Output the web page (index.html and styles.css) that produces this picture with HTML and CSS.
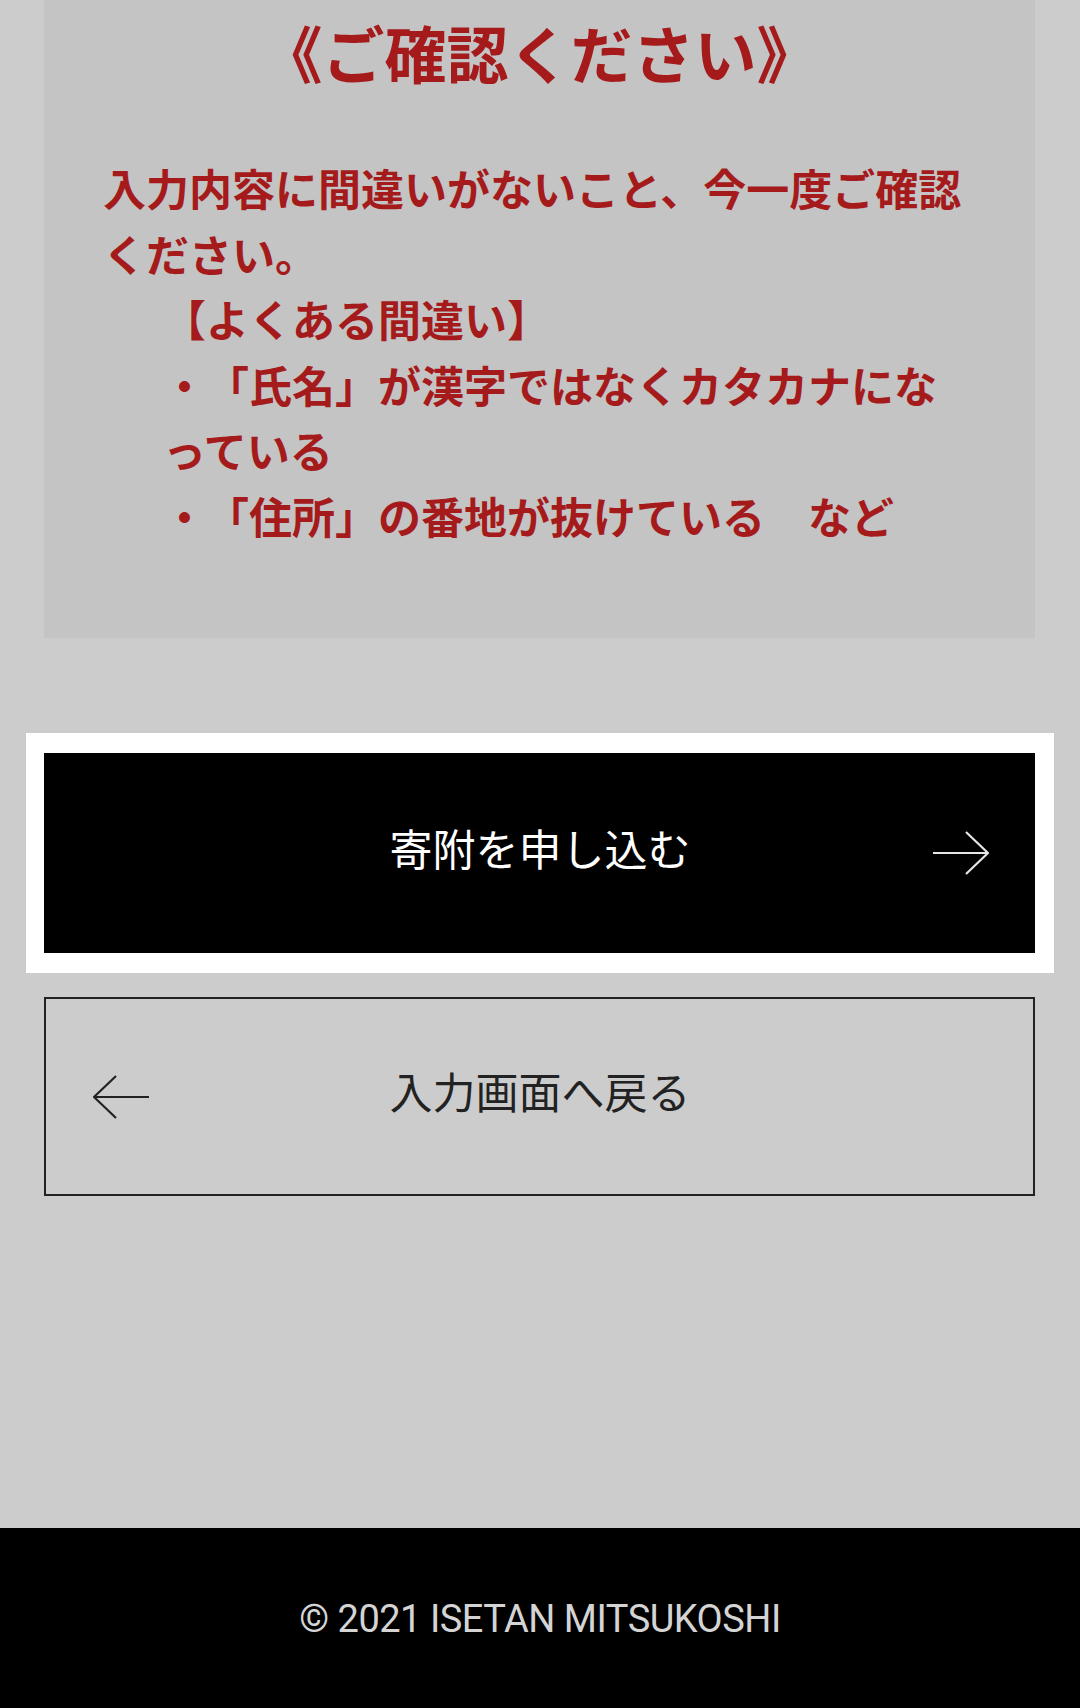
FILE: index.html
```html
<!DOCTYPE html>
<html lang="ja">
<head>
  <meta charset="UTF-8" />
  <title>寄附内容の確認</title>
  <link rel="stylesheet" href="styles.css">
</head>
<body>

  <!-- Main content -->
  <div class="main-content">

    <!-- Confirmation notice -->
    <div class="confirm-box">
      <h2>《ご確認ください》</h2>
      <p class="confirm-text">入力内容に間違いがないこと、今一度ご確認ください。</p>
      <div class="mistakes">
        <p>【よくある間違い】</p>
        <p>・「氏名」が漢字ではなくカタカナになっている</p>
        <p>・「住所」の番地が抜けている　など</p>
      </div>
    </div>

    <!-- Submit button (highlighted) -->
    <div class="submit-wrap">
      <button class="btn btn-submit" id="submitBtn">
        <span class="btn-icon"></span>
        <span class="btn-label">寄附を申し込む</span>
        <svg class="btn-icon" viewBox="0 0 56 44" width="56" height="44">
          <path d="M0 22 H55 M33 1 L55 22 L33 43" fill="none" stroke="#e6e6e6" stroke-width="2.2"/>
        </svg>
      </button>
    </div>

    <!-- Back button -->
    <button class="btn btn-back" id="backBtn">
      <svg class="btn-icon" viewBox="0 0 56 44" width="56" height="44">
        <path d="M56 22 H1 M23 1 L1 22 L23 43" fill="none" stroke="#222" stroke-width="2.2"/>
      </svg>
      <span class="btn-label">入力画面へ戻る</span>
      <span class="btn-icon"></span>
    </button>

  </div>

  <footer class="footer">
    <p>© 2021 ISETAN MITSUKOSHI</p>
  </footer>

</body>
</html>
```

FILE: styles.css
```css
* {
  margin: 0;
  padding: 0;
  box-sizing: border-box;
}

body {
  font-family: "Noto Sans CJK JP", "Noto Sans", sans-serif;
  background-color: #cccccc;
  width: 1080px;
  text-spacing-trim: space-all;
}

/* Main Content */
.main-content {
  padding: 0 45px 0 44px;
}

/* Confirmation box */
.confirm-box {
  background-color: #c4c4c4;
  padding: 10px 59px 90px 59px;
  color: #a51b1c;
  font-weight: bold;
}

.confirm-box h2 {
  font-size: 62px;
  line-height: 84px;
  text-align: center;
  margin-bottom: 61px;
}

.confirm-text,
.mistakes p {
  font-size: 43px;
  line-height: 65.5px;
}

.mistakes {
  margin-left: 60px;
}

/* Buttons */
.submit-wrap {
  background-color: #fff;
  margin: 95px -19px 0 -18px;
  padding: 20px 19px 20px 18px;
}

.btn {
  display: grid;
  grid-template-columns: 56px 1fr 56px;
  align-items: center;
  width: 100%;
  padding: 0 46px 0 47px;
  font-family: "Noto Sans CJK JP", "Noto Sans", sans-serif;
  font-size: 43px;
  font-weight: normal;
  cursor: pointer;
}

.btn-label {
  text-align: center;
  padding-bottom: 13px;
}

.btn-icon {
  display: block;
}

.btn-submit {
  height: 200px;
  background-color: #000;
  color: #fff;
  border: none;
}

.btn-back {
  height: 199px;
  margin-top: 24px;
  background-color: transparent;
  color: #222;
  border: 2px solid #222;
}

/* Footer */
.footer {
  margin-top: 332px;
  height: 181px;
  background-color: #000;
  display: flex;
  align-items: center;
  justify-content: center;
}

.footer p {
  font-family: Roboto, "Liberation Sans", sans-serif;
  font-size: 38px;
  letter-spacing: -0.5px;
  color: #d4d4d4;
}
```
